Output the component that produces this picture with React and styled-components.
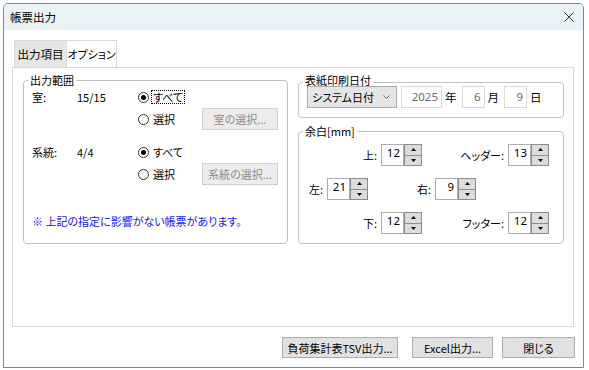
import React from "react"
import styled, { createGlobalStyle } from "styled-components"

const GlobalStyle = createGlobalStyle`
    body {
        margin: 0;
        background: #fff;
        font-family: "Noto Sans CJK JP", "Noto Sans", sans-serif;
        font-size: 11px;
        color: #000;
        font-feature-settings: "palt";
        white-space: nowrap;
    }
    * {
        box-sizing: border-box;
    }
`

const Window = styled.div`
    margin: 3px 0 0 3px;
    width: 581px;
    height: 365px;
    border: 1px solid #4a8fd8;
    border-radius: 5px 5px 0 0;
    background: #fff;
    display: flex;
    flex-direction: column;
    overflow: hidden;
`

const TitleBar = styled.div`
    height: 26px;
    flex: none;
    background: #eaf4f7;
    display: flex;
    align-items: center;
    justify-content: space-between;
    padding: 0 9px 0 6px;
    font-size: 11.5px;
    line-height: 16px;
`

const Body = styled.div`
    display: flex;
    flex-direction: column;
    padding: 10px 8px 0 8px;
`

const TabStrip = styled.div`
    display: flex;
    padding-left: 2px;
    height: 27px;
`

const Tab = styled.div`
    width: ${p => p.w}px;
    border: 1px solid #d9d9d9;
    border-bottom: none;
    background: ${p => p.shaded ? "#e6e6e6" : "#fff"};
    display: flex;
    align-items: center;
    justify-content: center;
    font-size: ${p => p.size || 11}px;
    & + & {
        border-left: none;
    }
`

const Panel = styled.div`
    width: 562px;
    height: 260px;
    border: 1px solid #d9d9d9;
    display: flex;
    gap: 10px;
    padding: 6px 9px 0 10px;
`

const Group = styled.fieldset`
    margin: 0;
    padding: 0;
    min-width: 0;
    width: ${p => p.w}px;
    height: ${p => p.h}px;
    border: 1px solid #c2c2c2;
    border-radius: 4px;
`

const Legend = styled.legend`
    margin-left: 4px;
    padding: 0 2px ${p => p.lift || 0}px;
    line-height: 12px;
`

const RangeGrid = styled.div`
    display: grid;
    grid-template-columns: 45px 61px 64px 76px;
    grid-auto-rows: 22px;
    align-items: center;
    padding-left: 8px;
    margin-top: ${p => p.top}px;
`

const RadioLabel = styled.label`
    display: flex;
    align-items: center;
    gap: 3px;
`

const RadioDot = styled.span`
    width: 11px;
    height: 11px;
    border-radius: 50%;
    border: 1px solid #333;
    background: #fff;
    &::after {
        content: "";
        display: ${p => p.checked ? "block" : "none"};
        width: 5px;
        height: 5px;
        margin: 2px;
        border-radius: 50%;
        background: #000;
    }
`

const RadioText = styled.span`
    padding: 0 1px;
    line-height: 12px;
    outline: ${p => p.focus ? "1px dotted #000" : "none"};
`

const PushButton = styled.button`
    font: inherit;
    width: ${p => p.w}px;
    height: ${p => p.h || 21}px;
    padding: 0;
    margin-right: ${p => p.extra || 0}px;
    background: ${p => p.disabled ? "#ececec" : "#e1e1e1"};
    border: 1px solid ${p => p.disabled ? "#cfcfcf" : "#adadad"};
    color: ${p => p.disabled ? "#8a8a8a" : "#000"};
`

const Note = styled.div`
    color: #1616ee;
    padding-left: 8px;
    margin-top: 28px;
    line-height: 16px;
`

const Column = styled.div`
    display: flex;
    flex-direction: column;
    gap: 7px;
`

const DateRow = styled.div`
    display: flex;
    align-items: center;
    padding-left: 8px;
    margin-top: -5px;
`

const Select = styled.div`
    width: 90px;
    height: 22px;
    background: #e5e5e5;
    border: 1px solid #acacac;
    display: flex;
    align-items: center;
    justify-content: space-between;
    padding: 0 6px 0 4px;
`

const DateBox = styled.div`
    width: ${p => p.w}px;
    height: 22px;
    margin-left: ${p => p.left || 0}px;
    border: 1px solid #d9d9d9;
    color: #6d6d6d;
    text-align: right;
    padding-right: 3px;
    line-height: 20px;
    font-family: "Noto Sans", sans-serif;
    font-size: 11.5px;
`

const Unit = styled.span`
    margin: 0 5px 0 3px;
    font-size: 11.5px;
`

const MarginRow = styled.div`
    display: flex;
    align-items: center;
    height: 22px;
    padding-left: ${p => p.indent}px;
    margin-top: ${p => p.top}px;
`

const Field = styled.div`
    display: flex;
    align-items: center;
    margin-left: ${p => p.left || 0}px;
`

const FieldLabel = styled.span`
    width: ${p => p.w}px;
    display: flex;
    justify-content: flex-end;
    padding-right: 4px;
`

const NumBox = styled.div`
    width: 23px;
    height: 22px;
    border: 1px solid #abadb3;
    text-align: right;
    padding: 0 3px 0 0;
    line-height: 16px;
    font-family: "Noto Sans", sans-serif;
    font-size: 11.5px;
`

const Spin = styled.div`
    width: 18px;
    height: 22px;
    border: 1px solid #8c8c8c;
    display: flex;
    flex-direction: column;
`

const SpinHalf = styled.div`
    flex: 1;
    background: #dcdcdc;
    display: flex;
    align-items: center;
    justify-content: center;
    & + & {
        border-top: 1px solid #8c8c8c;
    }
`

const Footer = styled.div`
    display: flex;
    justify-content: flex-end;
    gap: 9px;
    margin-top: 10px;
`

const Close = () => (
    <svg width="10" height="10" viewBox="0 0 10 10">
        <path d="M0.5 0.5 L9.5 9.5 M9.5 0.5 L0.5 9.5" stroke="#333" strokeWidth="1" />
    </svg>
)

const Chevron = () => (
    <svg width="7" height="4" viewBox="0 0 7 4">
        <path d="M0.5 0.5 L3.5 3.5 L6.5 0.5" stroke="#666" strokeWidth="1" fill="none" />
    </svg>
)

const Arrow = ({ down }) => (
    <svg width="5" height="3" viewBox="0 0 5 3">
        <path d={down ? "M0 0 H5 L2.5 3 Z" : "M0 3 H5 L2.5 0 Z"} fill="#000" />
    </svg>
)

const Radio = ({ checked, focus, children }) => (
    <RadioLabel>
        <RadioDot checked={checked} />
        <RadioText focus={focus}>{children}</RadioText>
    </RadioLabel>
)

const Spinner = ({ label, labelWidth, value, left }) => (
    <Field left={left}>
        <FieldLabel w={labelWidth}>{label}</FieldLabel>
        <NumBox>{value}</NumBox>
        <Spin>
            <SpinHalf><Arrow /></SpinHalf>
            <SpinHalf><Arrow down /></SpinHalf>
        </Spin>
    </Field>
)

const RangeBlock = ({ label, value, button, focus, top }) => (
    <RangeGrid top={top}>
        <span>{label}</span>
        <span>{value}</span>
        <Radio checked focus={focus}>すべて</Radio>
        <span />
        <span />
        <span />
        <Radio>選択</Radio>
        <PushButton w={76} h={22} disabled>{button}</PushButton>
    </RangeGrid>
)

export default function App() {
    return (
        <>
            <GlobalStyle />
            <Window>
                <TitleBar>
                    <span>帳票出力</span>
                    <Close />
                </TitleBar>
                <Body>
                    <TabStrip>
                        <Tab w={53} shaded size={11.5}>出力項目</Tab>
                        <Tab w={50}>オプション</Tab>
                    </TabStrip>
                    <Panel>
                        <Group w={265} h={170}>
                            <Legend>出力範囲</Legend>
                            <RangeBlock label="室:" value="15/15" button="室の選択..." focus top={0} />
                            <RangeBlock label="系統:" value="4/4" button="系統の選択..." top={11} />
                            <Note>※ 上記の指定に影響がない帳票があります。</Note>
                        </Group>
                        <Column>
                            <Group w={266} h={44}>
                                <Legend lift={5}>表紙印刷日付</Legend>
                                <DateRow>
                                    <Select>
                                        <span>システム日付</span>
                                        <Chevron />
                                    </Select>
                                    <DateBox w={41} left={4}>2025</DateBox>
                                    <Unit>年</Unit>
                                    <DateBox w={23}>6</DateBox>
                                    <Unit>月</Unit>
                                    <DateBox w={23}>9</DateBox>
                                    <Unit>日</Unit>
                                </DateRow>
                            </Group>
                            <Group w={266} h={119}>
                                <Legend>余白[mm]</Legend>
                                <MarginRow indent={58} top={7}>
                                    <Spinner label="上:" labelWidth={24} value="12" />
                                    <Spinner label="ヘッダー:" labelWidth={44} value="13" left={42} />
                                </MarginRow>
                                <MarginRow indent={4} top={12}>
                                    <Spinner label="左:" labelWidth={24} value="21" />
                                    <Spinner label="右:" labelWidth={24} value="9" left={43} />
                                </MarginRow>
                                <MarginRow indent={58} top={12}>
                                    <Spinner label="下:" labelWidth={24} value="12" />
                                    <Spinner label="フッター:" labelWidth={44} value="12" left={42} />
                                </MarginRow>
                            </Group>
                        </Column>
                    </Panel>
                    <Footer>
                        <PushButton w={116} extra={5}>負荷集計表TSV出力...</PushButton>
                        <PushButton w={81}>Excel出力...</PushButton>
                        <PushButton w={73}>閉じる</PushButton>
                    </Footer>
                </Body>
            </Window>
        </>
    )
}
